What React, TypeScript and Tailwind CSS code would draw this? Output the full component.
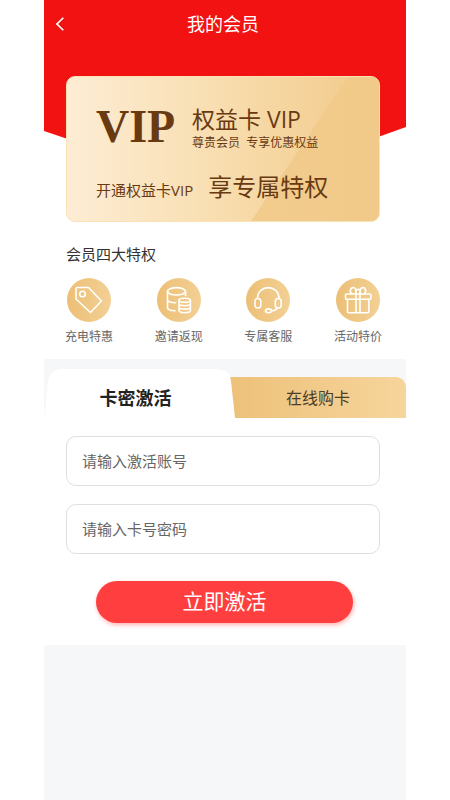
import { useState } from "react";
import type { ReactNode } from "react";
import clsx from "clsx";

interface Benefit {
  label: string;
  icon: ReactNode;
}

const benefits: Benefit[] = [
  {
    label: "充电特惠",
    icon: (
      <>
        <path d="M10 9.5h11.5L34.5 23 23.5 34.5 9 21V10.500Q9 9.500 10 9.500Z" />
        <circle cx="15.500" cy="16" r="2.800" />
      </>
    ),
  },
  {
    label: "邀请返现",
    icon: (
      <>
        <ellipse cx="19.5" cy="13.3" rx="9" ry="3.7" />
        <path d="M10.5 13.3V29.5c0 1.8 3 3.2 7.5 3.3M28.5 13.3v4.2M10.5 21.5c0 1.8 3.5 3.2 8 3.3" />
        <ellipse cx="27.7" cy="22.3" rx="5.7" ry="2" />
        <path d="M22 22.3v10.2c0 3 11.4 3 11.4 0V22.3M22 25.8c0 2.6 11.4 2.6 11.4 0M22 29.2c0 2.6 11.4 2.6 11.4 0" />
      </>
    ),
  },
  {
    label: "专属客服",
    icon: (
      <>
        <path d="M11.5 20.5C11.5 6 33 6 33 20.5" />
        <rect x="9" y="20.5" width="5.8" height="9.5" rx="2.8" />
        <rect x="29.3" y="20.5" width="5.8" height="9.5" rx="2.8" />
        <path d="M31.5 30c-1 1.8-3 2.7-6 2.8" />
        <ellipse cx="22.5" cy="32.8" rx="3" ry="1.9" />
      </>
    ),
  },
  {
    label: "活动特价",
    icon: (
      <>
        <rect x="9.5" y="16" width="25.5" height="5.2" rx="1" />
        <path d="M11.5 21.2V33.5q0 1.2 1.2 1.2h19q1.2 0 1.2-1.2V21.2M20 12v22.7M24 12v22.7" />
        <path d="M16 16c-3.5-2.5-1-7 2-6.2 2.2.6 2.2 3 2 6.2M28 16c3.5-2.5 1-7-2-6.2-2.2.6-2.2 3-2 6.2M20 12.5c0-1.5 4-1.5 4 0" />
      </>
    ),
  },
];

type Tab = "activate" | "purchase";

function MemberCard() {
  return (
    <div className="relative -mt-[116px] ml-[22px] mr-[26px] overflow-hidden rounded-[9px] border border-[#fbe2b5] bg-linear-to-r from-[#fdedd5] via-[#f8ddae] to-[#f1c988] text-[#693a12]">
      {/* diagonal sheen */}
      <div className="absolute inset-0 bg-linear-to-r from-[#f4cf95] to-[#f1ca89] [clip-path:polygon(90%_0,100%_0,100%_100%,59%_100%)]" />
      <div className="relative px-[29px] pt-6 pb-4">
        <div className="flex items-center gap-5">
          <span className="w-[76px] font-['Liberation_Serif'] text-[46px] leading-[52px] font-bold">VIP</span>
          <div>
            <h2 className="text-[23px] leading-[31px]">权益卡 VIP</h2>
            <p className="font-[Lato,'Noto_Sans_CJK_SC',sans-serif] text-xs leading-4 whitespace-pre">尊贵会员  专享优惠权益</p>
          </div>
        </div>
        <div className="mt-[18px] flex items-baseline gap-[15px] pb-[2px]">
          <span className="text-[15px] whitespace-nowrap">开通权益卡VIP</span>
          <span className="text-2xl whitespace-nowrap">享专属特权</span>
        </div>
      </div>
    </div>
  );
}

function BenefitList() {
  return (
    <section className="pt-[18px] pr-[18px] pb-3 pl-[15px]">
      <h2 className="px-[7px] text-[15px] leading-7 text-[#333]">会员四大特权</h2>
      <ul className="mt-[10px] flex justify-between">
        {benefits.map((item) => (
          <li key={item.label} className="flex w-[60px] flex-col items-center">
            <span className="rounded-full bg-linear-to-r from-[#ecbf75] to-[#f3d095]">
              <svg
                viewBox="0 0 44 44"
                className="size-11"
                fill="none"
                stroke="white"
                strokeWidth="1.6"
                strokeLinecap="round"
                strokeLinejoin="round"
                aria-hidden="true"
              >
                {item.icon}
              </svg>
            </span>
            <span className="mt-[5px] text-xs leading-5 text-[#666]">{item.label}</span>
          </li>
        ))}
      </ul>
    </section>
  );
}

export default function App() {
  const [tab, setTab] = useState<Tab>("activate");

  return (
    <div className="min-h-screen bg-white px-11 font-['Open_Sans','Noto_Sans_CJK_SC',sans-serif]">
      <div className="flex min-h-screen flex-col bg-[#f6f7f9]">
        <div className="bg-white">
          {/* Header */}
          <header className="h-48 bg-[#f31212] text-white [clip-path:polygon(0_0,100%_0,100%_127px,50%_192px,0_131px)]">
            <div className="grid h-12 grid-cols-[40px_1fr_44px] items-center">
              <button type="button" aria-label="返回" className="flex h-full items-center pl-3">
                <svg viewBox="0 0 8 14" className="h-[14px] w-2" fill="none" stroke="currentColor" strokeWidth="1.6">
                  <path d="M7.3.7 1 7l6.3 6.3" />
                </svg>
              </button>
              <h1 className="text-center text-lg">我的会员</h1>
            </div>
          </header>
          <MemberCard />
          <BenefitList />
        </div>

        {/* Tabs */}
        <div className="mt-[10px] flex items-end" role="tablist">
          <button
            type="button"
            role="tab"
            aria-selected={tab === "activate"}
            onClick={() => setTab("activate")}
            className="relative z-10 h-[49px] w-[191px] bg-white pt-2 pr-2 text-lg font-bold text-[#222] [clip-path:polygon(0_100%,4px_13px,5px_8px,8px_4px,12px_1px,17px_0,calc(100%_-_18px)_0,calc(100%_-_12px)_1px,calc(100%_-_8px)_3px,calc(100%_-_5px)_7px,calc(100%_-_4px)_12px,100%_100%)]"
          >
            卡密激活
          </button>
          <button
            type="button"
            role="tab"
            aria-selected={tab === "purchase"}
            onClick={() => setTab("purchase")}
            className="-ml-[5px] h-[41px] flex-1 rounded-tr-[10px] bg-linear-to-r from-[#edc179] to-[#f6d59c] text-base text-[#4b3d28]"
          >
            在线购卡
          </button>
        </div>

        {/* Activation form */}
        <form className="bg-white pt-[18px] pr-[26px] pb-[22px] pl-[22px]" onSubmit={(e) => e.preventDefault()}>
          {["请输入激活账号", "请输入卡号密码"].map((hint, i) => (
            <input
              key={hint}
              type={i === 0 ? "text" : "password"}
              aria-label={hint}
              placeholder={hint}
              className={clsx(
                "block h-[50px] w-full rounded-[10px] border border-[#dfdfdf] px-[15px] text-[15px] text-[#333] placeholder:text-[#666]",
                i > 0 && "mt-[18px]"
              )}
            />
          ))}
          <div className="mt-[27px] pr-[27px] pl-[30px]">
            <button
              type="submit"
              className="h-[42px] w-full rounded-full bg-[#ff3f3f] text-[21px] text-white shadow-[1px_2px_4px_rgba(255,63,63,0.4)]"
            >
              立即激活
            </button>
          </div>
        </form>
      </div>
    </div>
  );
}
